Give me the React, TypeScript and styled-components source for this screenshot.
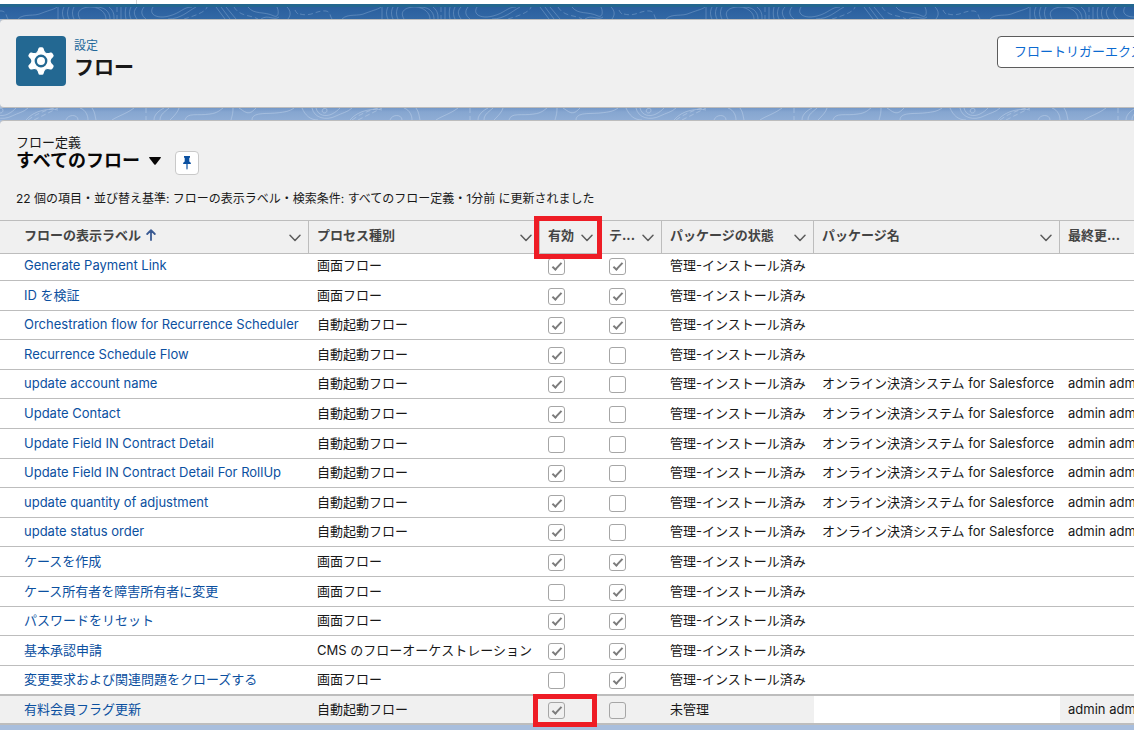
import React from "react";
import styled, { createGlobalStyle, css } from "styled-components";

const GlobalStyle = createGlobalStyle`
  *, *::before, *::after { box-sizing: border-box; }
  body {
    margin: 0;
    background: #a8bedd;
    color: #181818;
    font: 13px/20px Inter, "Noto Sans CJK JP", sans-serif;
  }
`;

const Page = styled.div`
  min-height: 100vh;
  overflow: hidden;
`;

const TabStrip = styled.div`
  height: 4px;
  background: #fff;
  display: flex;
`;

const TabEdge = styled.span`
  width: 137px;
  border-right: 1px solid #d5d5d5;
`;

const Band = styled.div<{ $light?: boolean }>`
  height: ${(p) => (p.$light ? 12 : 15)}px;
  overflow: hidden;
  border-top: ${(p) => (p.$light ? "0" : "3px solid #23678f")};
  background: ${(p) =>
    p.$light
      ? "linear-gradient(#7498c6, #86a6d0 4px, #8fadd5)"
      : "linear-gradient(#2a5f9e, #3268a5)"};
  svg { display: block; width: 100%; height: 100%; }
`;

const Card = styled.section`
  background: #f0f0f0;
  border: 1px solid #bdbdbd;
  border-width: 1px 0;
  border-radius: 4px 0 0 4px;
`;

const PageHeader = styled(Card)`
  display: flex;
  align-items: flex-start;
  justify-content: space-between;
  gap: 16px;
  min-height: 89px;
  padding: 16px 0 16px 16px;
`;

const Heading = styled.div`
  display: flex;
  gap: 8px;
`;

const IconTile = styled.span`
  display: grid;
  place-items: center;
  width: 50px;
  height: 50px;
  border-radius: 4px;
  background: #236892;
`;

const Eyebrow = styled.p`
  margin: 0;
  font-size: 12px;
  line-height: 20px;
  color: #23689a;
`;

const Title = styled.h1`
  margin: 0;
  font-size: 20px;
  line-height: 24px;
  font-weight: 700;
`;

const HeaderButton = styled.button`
  flex: none;
  width: 217px;
  height: 32px;
  margin-right: -80px;
  padding: 0 16px 2px;
  border: 1px solid #5c5c5c;
  border-radius: 4px;
  background: #fff;
  color: #0b6ad0;
  font: inherit;
  text-align: left;
  white-space: nowrap;
`;

const ListCard = styled(Card)`
  border-bottom: 0;
`;

const ListHeader = styled.header`
  padding: 11px 16px;
`;

const ListKind = styled.p`
  margin: 0;
  line-height: 20px;
`;

const ViewRow = styled.div`
  display: flex;
  align-items: center;
  height: 18px;
`;

const ViewButton = styled.button`
  display: flex;
  align-items: center;
  gap: 9px;
  padding: 0;
  border: 0;
  background: none;
  color: #080707;
  font: inherit;
  font-size: 18px;
  line-height: 22px;
  font-weight: 700;
`;

const PinButton = styled.button`
  display: grid;
  place-items: center;
  width: 24px;
  height: 24px;
  margin: 4px 0 0 14px;
  padding: 0;
  border: 1px solid #c9c9c9;
  border-radius: 4px;
  background: #fff;
`;

const Meta = styled.p`
  margin: 19px 0 0;
  font-size: 12px;
  line-height: 20px;
`;

const FlowTable = styled.table`
  width: 100%;
  min-width: 1180px;
  table-layout: fixed;
  border-collapse: separate;
  border-spacing: 0;
  background: #fff;
`;

const Col = styled.col<{ $w?: number }>`
  width: ${(p) => (p.$w ? `${p.$w}px` : "auto")};
`;

const HeadCell = styled.th<{ $first?: boolean }>`
  position: relative;
  height: 34px;
  padding: 0 8px 4px ${(p) => (p.$first ? 24 : 8)}px;
  border: 1px solid #bdbdbd;
  border-width: 1px 1px 1px 0;
  background: #f0f0f0;
  color: #444;
  font-weight: 700;
  text-align: left;
  white-space: nowrap;
`;

const HeadInner = styled.div`
  display: flex;
  align-items: center;
  justify-content: space-between;
`;

const HeadLabel = styled.span`
  display: flex;
  align-items: center;
  gap: 5px;
`;

const MenuButton = styled.button`
  display: grid;
  place-items: center;
  width: 12px;
  height: 12px;
  margin: 6px -1px 0 0;
  padding: 0;
  border: 0;
  background: none;
`;

const Row = styled.tr<{ $active?: boolean }>`
  height: 30px;
  &:nth-child(5n + 3), &:nth-child(5n) { height: 29px; }
  &:first-child { height: 27px; }
  &:first-child td { padding-bottom: 4px; }
  ${(p) =>
    p.$active &&
    css`
      background: #f0f0f0;
      td { border-top: 1px solid #bdbdbd; border-bottom-width: 2px; }
    `}
`;

const Cell = styled.td<{ $first?: boolean; $blank?: boolean }>`
  padding: 0 0 2px ${(p) => (p.$first ? 24 : 8)}px;
  border-bottom: 1px solid #bdbdbd;
  line-height: 20px;
  white-space: nowrap;
  ${(p) => p.$blank && "background: #fff;"}
`;

const FlowLink = styled.a`
  color: #0b50a0;
  text-decoration: none;
`;

const Check = styled.input`
  appearance: none;
  display: block;
  width: 17px;
  height: 17px;
  margin: 3px 0 0;
  border: 1px solid #a6a6a6;
  border-radius: 3px;
  background: transparent;
  &:checked::after {
    content: "";
    display: block;
    width: 10px;
    height: 5px;
    margin: 4px 0 0 3px;
    border: solid #7c7c7c;
    border-width: 0 0 2px 2px;
    transform: rotate(-47deg);
  }
`;

const Highlight = styled.span<{ $head?: boolean }>`
  position: absolute;
  z-index: 2;
  pointer-events: none;
  border: 5px solid #ee1c25;
  top: -5px;
  left: ${(p) => (p.$head ? -6 : -15)}px;
  width: ${(p) => (p.$head ? 68 : 64)}px;
  height: ${(p) => (p.$head ? 43 : 33)}px;
`;

const CheckWrap = styled.div`
  position: relative;
  display: flex;
`;

const Chevron = () => (
  <svg width="12" height="8" viewBox="0 0 12 8" fill="none" stroke="#5c5c5c" strokeWidth="1.5" strokeLinecap="round" strokeLinejoin="round">
    <path d="M1 1.2 6 6.5 11 1.2" />
  </svg>
);

const Gear = () => {
  const teeth = [0, 60, 120, 180, 240, 300];
  return (
    <svg width="28" height="28" viewBox="-14 -14 28 28">
      <circle r="9.4" fill="#fff" />
      {teeth.map((a) => (
        <path key={a} transform={`rotate(${a})`} d="M-5-8.2Q-3-9.5-2.7-12.2-2.4-13.8-1.1-13.8H1.1Q2.4-13.8 2.7-12.2 3-9.5 5-8.2Z" fill="#fff" />
      ))}
      <circle r="5.2" fill="none" stroke="#236892" strokeWidth="2.4" />
    </svg>
  );
};

const DarkContours = () => (
  <svg aria-hidden="true">
    <defs>
      <pattern id="dark-contours" width="324" height="15" patternUnits="userSpaceOnUse" x="300" y="0">
        <g fill="none" stroke="#7fa3cd" strokeOpacity=".5" strokeWidth="1">
          <path d="M42 12C48 6 58 10 66 6 74 3 79 2 81 0M82 0V12M88 0C86 4 86 8 88 12M93 0C91 4 91 8 93 12M98 0C96 4 96 8 98 12M104 12C99 4 106 0 115 0 124 0 130 6 130 12M120 0C132 0 134 8 134 12M133 0C138 4 138 8 138 12M145 0V12M150 0C149 4 149 8 150 12M155 0C153 4 153 8 155 12M161 0C157 4 158 8 161 12M168 0C164 5 166 9 170 12M177 0C172 8 182 12 193 9 205 6 207 0 216 0M192 12C205 12 212 4 220 0M240 0 249 12M245 0 254 12M250 0 260 12M272 0C278 8 288 4 298 9 303 11 303 4 301 0M285 12C292 7 298 14 303 10M311 0C315 4 315 8 312 12" />
          <path strokeDasharray="5 3" d="M0 7C12 10 16 3 26 4 31 5 30 10 32 12M141 0V12M208 12C218 9 230 5 231 0M258 0C264 10 276 8 282 12M319 3C321 7 322 7 324 7" />
        </g>
      </pattern>
    </defs>
    <rect width="100%" height="100%" fill="url(#dark-contours)" />
  </svg>
);

const LightContours = () => (
  <svg aria-hidden="true">
    <defs>
      <pattern id="light-contours" width="324" height="12" patternUnits="userSpaceOnUse" x="300" y="0">
        <g fill="none" stroke="#c0d2ea" strokeOpacity=".5" strokeWidth="1">
          <path d="M2 0C5 7 10 12 18 12M12 0C14 10 26 13 36 8 42 5 48 4 52 0M16 0C18 8 26 9 32 6 36 4 38 2 40 0M23 1C20 5 27 7 27 2 27 0 24 0 23 1M50 12C58 2 74 0 82 2M104 0C110 2 112 8 112 12M90 12C92 6 102 6 102 12M116 0C119 4 119 8 120 12M136 12C142 8 150 6 158 0M178 12C178 6 184 2 188 0M184 12C184 6 190 3 193 0M194 12C198 8 202 4 203 0M209 12C211 4 222 8 234 6 242 5 244 2 247 0M257 0C257 6 256 8 255 12M263 0C268 3 272 8 278 2L280 0M276 12C276 4 290 6 300 5 310 4 314 3 318 0" />
          <path strokeDasharray="5 3" d="M52 12C60 6 68 3 78 0M58 12C66 8 72 5 82 0M170 0V12" />
        </g>
      </pattern>
    </defs>
    <rect width="100%" height="100%" fill="url(#light-contours)" />
  </svg>
);

const SCREEN = "画面フロー";
const AUTO = "自動起動フロー";
const PKG = "オンライン決済システム for Salesforce";

type Flow = { name: string; type: string; on: boolean; template: boolean; pkg?: boolean; local?: boolean };

const flows: Flow[] = [
  { name: "Generate Payment Link", type: SCREEN, on: true, template: true },
  { name: "ID を検証", type: SCREEN, on: true, template: true },
  { name: "Orchestration flow for Recurrence Scheduler", type: AUTO, on: true, template: true },
  { name: "Recurrence Schedule Flow", type: AUTO, on: true, template: false },
  { name: "update account name", type: AUTO, on: true, template: false, pkg: true },
  { name: "Update Contact", type: AUTO, on: true, template: false, pkg: true },
  { name: "Update Field IN Contract Detail", type: AUTO, on: false, template: false, pkg: true },
  { name: "Update Field IN Contract Detail For RollUp", type: AUTO, on: true, template: false, pkg: true },
  { name: "update quantity of adjustment", type: AUTO, on: true, template: false, pkg: true },
  { name: "update status order", type: AUTO, on: true, template: false, pkg: true },
  { name: "ケースを作成", type: SCREEN, on: true, template: true },
  { name: "ケース所有者を障害所有者に変更", type: SCREEN, on: false, template: true },
  { name: "パスワードをリセット", type: SCREEN, on: true, template: true },
  { name: "基本承認申請", type: "CMS のフローオーケストレーション", on: true, template: true },
  { name: "変更要求および関連問題をクローズする", type: SCREEN, on: false, template: true },
  { name: "有料会員フラグ更新", type: AUTO, on: true, template: false, local: true },
];

const columns = [
  { label: "フローの表示ラベル", width: 309, sorted: true },
  { label: "プロセス種別", width: 231 },
  { label: "有効", width: 61, marked: true },
  { label: "テ...", width: 61 },
  { label: "パッケージの状態", width: 152 },
  { label: "パッケージ名", width: 246 },
  { label: "最終更...", width: undefined },
];

export default function App() {
  return (
    <>
      <GlobalStyle />
      <Page>
        <TabStrip><TabEdge /></TabStrip>
        <Band><DarkContours /></Band>
        <PageHeader>
          <Heading>
            <IconTile><Gear /></IconTile>
            <div>
              <Eyebrow>設定</Eyebrow>
              <Title>フロー</Title>
            </div>
          </Heading>
          <HeaderButton type="button">フロートリガーエクスプローラー</HeaderButton>
        </PageHeader>
        <Band $light><LightContours /></Band>
        <ListCard>
          <ListHeader>
            <ListKind>フロー定義</ListKind>
            <ViewRow>
              <ViewButton type="button">
                すべてのフロー
                <svg width="12" height="8" viewBox="0 0 12 8"><path d="M.6 0H11.4Q12.3 0 11.7.9L6.7 7.4Q6 8.2 5.3 7.4L.3.9Q-.3 0 .6 0Z" fill="#080707" /></svg>
              </ViewButton>
              <PinButton type="button" aria-label="固定">
                <svg width="8" height="14" viewBox="0 0 8 14" fill="#0b50a0">
                  <path d="M1 0H7V1.4L6.3 2V5.6Q8 6.4 8 8H4.6V12.6L4 14 3.4 12.6V8H0Q0 6.4 1.7 5.6V2L1 1.4Z" />
                </svg>
              </PinButton>
            </ViewRow>
            <Meta>22 個の項目・並び替え基準: フローの表示ラベル・検索条件: すべてのフロー定義・1分前 に更新されました</Meta>
          </ListHeader>
          <FlowTable>
            <colgroup>
              {columns.map((c) => <Col key={c.label} $w={c.width} />)}
            </colgroup>
            <thead>
              <tr>
                {columns.map((c) => (
                  <HeadCell key={c.label} $first={c.sorted} scope="col">
                    <HeadInner>
                      <HeadLabel>
                        {c.label}
                        {c.sorted && (
                          <svg width="10" height="12" viewBox="0 0 10 12" fill="none" stroke="#3a5a92" strokeWidth="1.8" strokeLinecap="round" strokeLinejoin="round">
                            <path d="M5 11V1.2M1.2 5 5 1.2 8.8 5" />
                          </svg>
                        )}
                      </HeadLabel>
                      <MenuButton type="button" aria-label={c.label}><Chevron /></MenuButton>
                    </HeadInner>
                    {c.marked && <Highlight $head />}
                  </HeadCell>
                ))}
              </tr>
            </thead>
            <tbody>
              {flows.map((f) => (
                <Row key={f.name} $active={f.local}>
                  <Cell $first><FlowLink href="#">{f.name}</FlowLink></Cell>
                  <Cell>{f.type}</Cell>
                  <Cell>
                    <CheckWrap>
                      <Check type="checkbox" checked={f.on} readOnly aria-label={`${f.name} 有効`} />
                      {f.local && <Highlight />}
                    </CheckWrap>
                  </Cell>
                  <Cell><Check type="checkbox" checked={f.template} readOnly aria-label={`${f.name} テンプレート`} /></Cell>
                  <Cell>{f.local ? "未管理" : "管理-インストール済み"}</Cell>
                  <Cell $blank={f.local}>{f.pkg && PKG}</Cell>
                  <Cell>{(f.pkg || f.local) && "admin admin"}</Cell>
                </Row>
              ))}
            </tbody>
          </FlowTable>
        </ListCard>
      </Page>
    </>
  );
}
